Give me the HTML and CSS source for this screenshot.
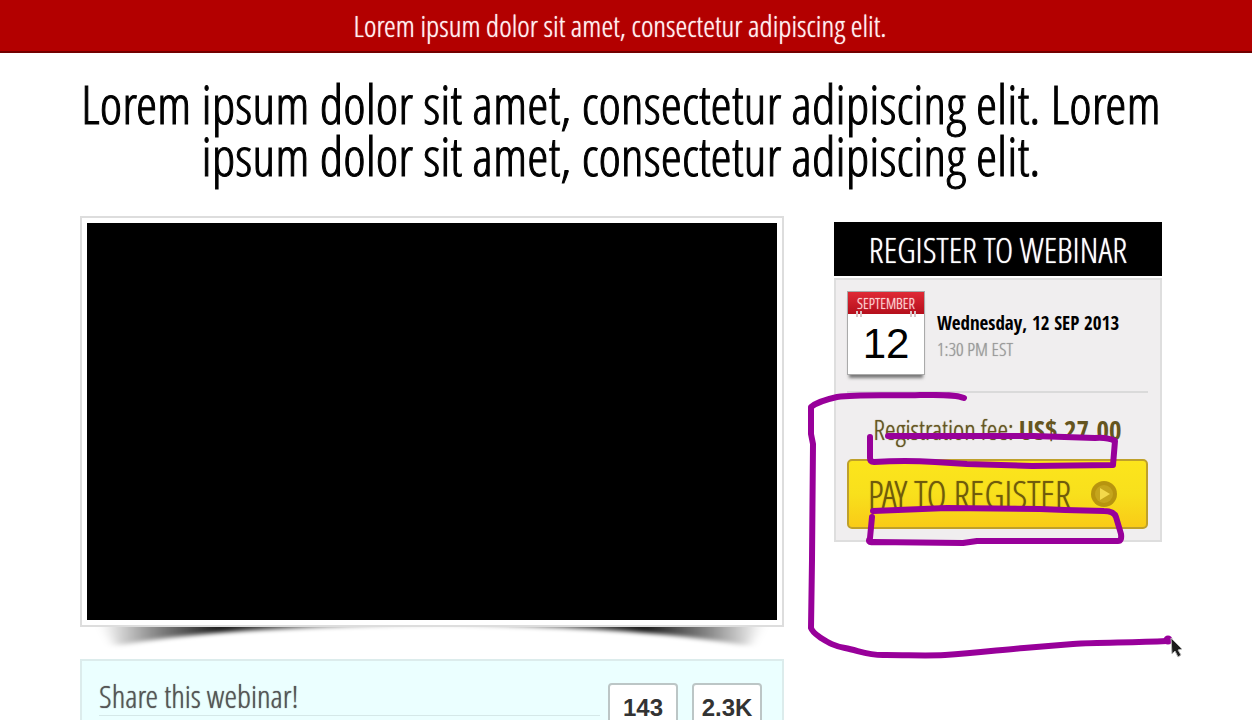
FILE: index.html
```html
<!DOCTYPE html>
<html lang="en">
<head>
    <meta charset="UTF-8">
    <meta name="viewport" content="width=device-width, initial-scale=1.0">
    <title>Register to Webinar</title>
    <link rel="stylesheet" href="styles.css">
</head>
<body>
    <header class="top-bar">Lorem ipsum dolor sit amet, consectetur adipiscing elit.</header>
    <div class="container">
        <h1>Lorem ipsum dolor sit amet, consectetur adipiscing elit. Lorem ipsum dolor sit amet, consectetur adipiscing elit.</h1>
        <div class="columns">
            <main>
                <div class="video-frame">
                    <div class="video"></div>
                </div>
                <!-- Curved shadow under the video -->
                <svg class="video-shadow" viewBox="0 0 704 32" preserveAspectRatio="none" aria-hidden="true">
                    <defs>
                        <linearGradient id="shade" x1="0" x2="1" y1="0" y2="0">
                            <stop offset="0" stop-color="#000" stop-opacity="0"/>
                            <stop offset="0.08" stop-color="#000" stop-opacity="0.45"/>
                            <stop offset="0.18" stop-color="#000" stop-opacity="0.9"/>
                            <stop offset="0.45" stop-color="#000" stop-opacity="0.2"/>
                            <stop offset="0.55" stop-color="#000" stop-opacity="0.2"/>
                            <stop offset="0.82" stop-color="#000" stop-opacity="0.9"/>
                            <stop offset="0.92" stop-color="#000" stop-opacity="0.45"/>
                            <stop offset="1" stop-color="#000" stop-opacity="0"/>
                        </linearGradient>
                        <filter id="soft" x="-5%" y="-50%" width="110%" height="200%">
                            <feGaussianBlur stdDeviation="6 2"/>
                        </filter>
                    </defs>
                    <path d="M20 -6 H684 L668 19 C590 5 510 0 352 -2 C194 0 114 5 36 19 Z" fill="url(#shade)" filter="url(#soft)"/>
                </svg>
                <section class="share">
                    <h2>Share this webinar!</h2>
                    <ul class="counters">
                        <li>143</li>
                        <li>2.3K</li>
                    </ul>
                </section>
            </main>
            <aside class="register">
                <h2>REGISTER TO WEBINAR</h2>
                <div class="register-body">
                    <div class="event">
                        <div class="calendar">
                            <div class="month">SEPTEMBER</div>
                            <div class="day">12</div>
                            <!-- Binding rings -->
                            <svg class="rings" viewBox="0 0 76 8" aria-hidden="true">
                                <path d="M9 0 V6 M13 0 V6 M63 0 V6 M67 0 V6" stroke="#d8c4c6" stroke-width="2"/>
                            </svg>
                        </div>
                        <div class="when">
                            <strong>Wednesday, 12 SEP 2013</strong>
                            <span>1:30 PM EST</span>
                        </div>
                    </div>
                    <p class="fee">Registration fee: <strong>US$ 27.00</strong></p>
                    <button type="button" class="pay">
                        <span>PAY TO REGISTER</span>
                        <svg width="28" height="28" viewBox="0 0 28 28" aria-hidden="true">
                            <circle cx="14" cy="14" r="13" fill="#b7940f"/>
                            <circle cx="14" cy="14" r="9" fill="#c5a51c"/>
                            <path d="M10 8 L20 14 L10 20 Z" fill="#f3d94b"/>
                        </svg>
                    </button>
                </div>
                <!-- Pen marks and mouse pointer -->
                <svg class="pen" width="400" height="300" viewBox="800 380 400 300" aria-hidden="true">
                    <g fill="none" stroke="#98009a" stroke-width="6" stroke-linecap="round" stroke-linejoin="round">
                        <path d="M964 398 C954 394 938 395 920 395 C890 396 860 394 837 397 C828 399 817 402 811 407 L811 434 L813 444 L812 560 L811 628 C813 633 817 635 821 638 C829 643 834 646 845 648 C860 651 870 656 886 655 C910 655 925 656 945 655 C975 653 1000 650 1024 648 L1073 644 C1100 642 1130 643 1167 641"/>
                        <path d="M870 437 L870 458 Q870 462 874 462 Q905 460 935 462 L967 464 L1032 466 L1113 465 L1115 441 Q1107 437 1095 438 L1034 436 L888 436"/>
                        <path d="M872 517 L870 538 Q867 543 873 542 L963 543 L977 541 L1118 541 Q1122 541 1121 534 L1116 517 Q1114 511 1104 511 L1065 510 L1040 509 L947 508 L873 511"/>
                        <circle cx="1168" cy="640" r="3" fill="#98009a" stroke-width="3"/>
                    </g>
                    <path d="M1171 638 L1172 654 L1175 651 L1178 657 L1181 655 L1178 650 L1182 649 Z" fill="#1c1c1c" stroke="#bbb" stroke-width="1"/>
                </svg>
            </aside>
        </div>
    </div>
</body>
</html>
```
FILE: styles.css
```css
* {
    box-sizing: border-box;
}
body {
    margin: 0;
    background-color: #fff;
    color: #000;
    font-family: "Open Sans Condensed Light", "Open Sans Condensed", "Liberation Sans Narrow", sans-serif;
    font-weight: 300;
    overflow-x: hidden;
}
h1, h2, p, ul {
    margin: 0;
    padding: 0;
    font-weight: 300;
}
h2, .top-bar, .month, .when span, .fee, .pay span {
    text-shadow: 0 0 1px currentColor;
}
strong {
    font-family: "Open Sans Condensed", "Liberation Sans Narrow", sans-serif;
    font-weight: 700;
    text-shadow: none;
}
.top-bar {
    height: 53px;
    border-bottom: 2px solid #720000;
    background-color: #b30000;
    color: #fff0f0;
    font-size: 30px;
    line-height: 52px;
    text-align: center;
    padding-right: 12px;
}
.container {
    padding: 24px 90px 0 80px;
}
h1 {
    font-size: 54px;
    line-height: 52px;
    text-align: center;
    margin-bottom: 35px;
    -webkit-text-stroke: 1px #000;
}
.columns {
    display: grid;
    grid-template-columns: 704fr 328fr;
    gap: 50px;
    align-items: start;
}
.video-frame {
    border: 2px solid #ddd;
    padding: 5px;
    background-color: #fff;
}
.video {
    aspect-ratio: 690 / 397;
    background-color: #000;
}
.video-shadow {
    display: block;
    width: 100%;
    height: 32px;
    overflow: hidden;
}
.share {
    display: flex;
    justify-content: space-between;
    align-items: flex-start;
    gap: 8px;
    border: 2px solid #dcecec;
    padding: 16px 20px 16px 17px;
    background-color: #ebffff;
}
.share h2 {
    flex: 1;
    border-bottom: 1px solid #d5e8e8;
    color: #555;
    font-size: 32px;
    line-height: 38px;
}
.counters {
    display: flex;
    gap: 14px;
    list-style: none;
    padding-top: 6px;
}
.counters li {
    width: 70px;
    height: 48px;
    border: 2px solid #bcc6c6;
    border-radius: 4px;
    background-color: #fff;
    color: #333;
    font-family: "Liberation Sans", Arial, sans-serif;
    font-size: 24px;
    font-weight: bold;
    line-height: 46px;
    text-align: center;
}
.register {
    position: relative;
    margin-top: 6px;
}
.register h2 {
    background-color: #000;
    color: #fff;
    font-size: 35px;
    line-height: 56px;
    height: 54px;
    text-align: center;
}
.register-body {
    margin-top: 2px;
    border: 2px solid #dedede;
    padding: 11px 12px 11px 11px;
    background-color: #f0eeef;
}
.event {
    display: flex;
    align-items: center;
    gap: 12px;
    border-bottom: 2px solid #dadada;
    padding-bottom: 16px;
}
.calendar {
    position: relative;
    width: 78px;
    flex: none;
    border: 1px solid #aaa;
    background-color: #fff;
    box-shadow: 0 5px 3px -2px #777;
    text-align: center;
}
.month {
    background: linear-gradient(#df2a35, #b50f1c);
    color: #ffdcdc;
    font-size: 15px;
    line-height: 22px;
}
.day {
    font-family: "Liberation Sans", Arial, sans-serif;
    font-size: 42px;
    line-height: 60px;
    font-weight: normal;
}
.rings {
    position: absolute;
    top: 19px;
    left: 0;
    width: 100%;
    height: 8px;
}
.when {
    display: flex;
    flex-direction: column;
    font-size: 19px;
    line-height: 26px;
    white-space: nowrap;
    padding-top: 6px;
}
.when span {
    color: #999;
}
.fee {
    color: #65551f;
    font-size: 27px;
    line-height: 38px;
    text-align: center;
    white-space: nowrap;
    padding: 18px 0 10px;
}
.pay {
    display: flex;
    align-items: center;
    justify-content: space-between;
    width: 100%;
    height: 70px;
    border: 2px solid #bfa02a;
    border-radius: 5px;
    padding: 0 28px 0 19px;
    background: linear-gradient(#fce51c, #f8e01c 50%, #f9cb17);
    color: #6f5a0c;
    font-family: inherit;
    font-weight: inherit;
    font-size: 38px;
    line-height: 52px;
    white-space: nowrap;
    cursor: pointer;
}
.pay svg {
    flex: none;
}
.pen {
    position: absolute;
    top: 158px;
    left: -34px;
    pointer-events: none;
}
```
